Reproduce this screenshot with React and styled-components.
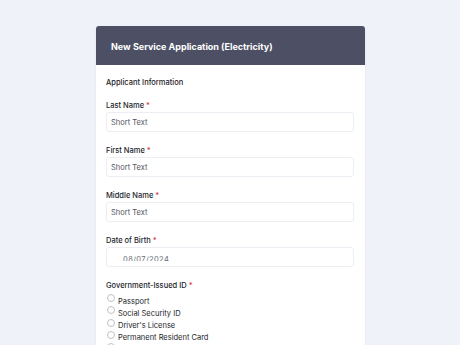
import styled, { createGlobalStyle } from 'styled-components'

const Global = createGlobalStyle`
  html, body {
    margin: 0;
    padding: 0;
    background: #eff2f8;
    font-family: Inter, "Noto Sans", sans-serif;
    overflow: hidden;
  }
`

const Page = styled.div`
  width: 460px;
  height: 345px;
  padding: 26px 0 0 96px;
  box-sizing: border-box;
  overflow: hidden;
`

const Card = styled.div`
  width: 269px;
  background: #fff;
  border-radius: 3px;
  box-shadow: 0 1px 3px rgba(40, 50, 80, 0.06);
  overflow: hidden;
`

const Header = styled.div`
  height: 38px;
  background: #4d5064;
  display: flex;
  align-items: center;
  padding: 1px 15px 0;
  color: #fff;
  font-size: 9px;
  font-weight: 700;
`

const Body = styled.div`
  padding: 13px 11px 20px 10px;
  display: flex;
  flex-direction: column;
`

const Section = styled.div`
  font-size: 7.5px;
  font-weight: 500;
  color: #1f2126;
  line-height: 10px;
  margin-bottom: 13px;
`

const Field = styled.div`
  display: flex;
  flex-direction: column;
  margin-bottom: 14px;
`

const Label = styled.div`
  font-size: 7.5px;
  font-weight: 500;
  color: #22252b;
  line-height: 10px;
  margin-bottom: 1px;
`

const Star = styled.span`
  color: #d6303a;
  margin-left: 2px;
`

const Input = styled.div`
  height: 20px;
  box-sizing: border-box;
  border: 1px solid #eceef3;
  border-radius: 3px;
  display: flex;
  align-items: ${p => (p.$date ? 'flex-start' : 'center')};
  padding: ${p => (p.$date ? '7px 0 0 16px' : '1px 4px 0')};
  font-size: 7.5px;
  color: ${p => (p.$date ? '#6b6e78' : '#51545d')};
  overflow: hidden;
  line-height: 10px;
`

const DateValue = styled.span`
  display: block;
  height: 6px;
  overflow: hidden;
  letter-spacing: 0.4px;
`

const Options = styled.div`
  display: flex;
  flex-direction: column;
  margin-top: 2px;
`

const Option = styled.div`
  display: flex;
  align-items: flex-start;
  height: 12.3px;
  font-size: 7.5px;
  color: #22252b;
`

const Radio = styled.span`
  width: 6px;
  height: 6px;
  border: 1px solid #bfc2ca;
  border-radius: 50%;
  margin: 0 3px 0 1px;
  flex-shrink: 0;
`

const OptionText = styled.span`
  padding-top: 2.5px;
  line-height: 10px;
`

const ids = ['Passport', 'Social Security ID', "Driver's License", 'Permanent Resident Card', 'Other']

export default function App() {
  return (
    <Page>
      <Global />
      <Card>
        <Header>New Service Application (Electricity)</Header>
        <Body>
          <Section>Applicant Information</Section>
          {['Last Name', 'First Name', 'Middle Name'].map(n => (
            <Field key={n}>
              <Label>
                {n}
                <Star>*</Star>
              </Label>
              <Input>Short Text</Input>
            </Field>
          ))}
          <Field>
            <Label>
              Date of Birth<Star>*</Star>
            </Label>
            <Input $date>
              <DateValue>08/07/2024</DateValue>
            </Input>
          </Field>
          <Field>
            <Label>
              Government-Issued ID<Star>*</Star>
            </Label>
            <Options>
              {ids.map(o => (
                <Option key={o}>
                  <Radio />
                  <OptionText>{o}</OptionText>
                </Option>
              ))}
            </Options>
          </Field>
        </Body>
      </Card>
    </Page>
  )
}
